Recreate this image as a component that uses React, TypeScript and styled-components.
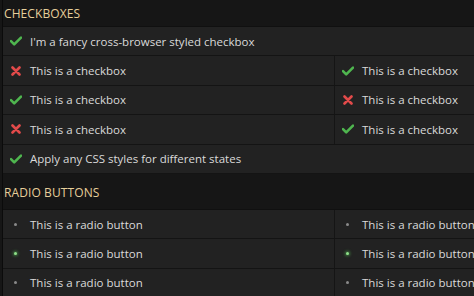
import React from "react";
import styled, { createGlobalStyle } from "styled-components";

const GlobalStyle = createGlobalStyle`
  *, *::before, *::after {
    box-sizing: border-box;
  }
  html, body {
    margin: 0;
    padding: 0;
    background: #161616;
    overflow: hidden;
  }
  body {
    font-family: "Open Sans", "DejaVu Sans", sans-serif;
  }
`;

const Page = styled.div`
  width: 474px;
  height: 296px;
  padding-left: 2px;
  background: #161616;
  display: flex;
  flex-direction: column;
`;

const Frame = styled.div`
  flex: 1;
  border-left: 1px solid #0b0b0b;
  display: flex;
  flex-direction: column;
`;

const Heading = styled.div<{ $gap?: number; $tail?: number }>`
  height: ${(p) => 27 + (p.$tail || 0)}px;
  flex: none;
  margin-top: ${(p) => p.$gap || 0}px;
  padding-bottom: ${(p) => p.$tail || 0}px;
  display: flex;
  align-items: center;
  padding-left: 1px;
  color: #e6cf9a;
  font-size: 12px;
  letter-spacing: 0.1px;
  border-bottom: 1px solid #101010;
`;

const Row = styled.div`
  display: flex;
  height: 29.4px;
  flex: none;
  background: #222222;
  border-bottom: 1px solid #141414;
`;

const Cell = styled.div<{ $w?: number }>`
  display: flex;
  align-items: center;
  flex: ${(p) => (p.$w ? `0 0 ${p.$w}px` : "1 1 auto")};
  min-width: 0;
  overflow: hidden;
  padding-left: 7px;
  gap: 9px;
  color: #dadada;
  font-size: 11.5px;
  white-space: nowrap;
  & + & {
    border-left: 1px solid #151515;
  }
`;

const IconBox = styled.span`
  width: 11px;
  height: 11px;
  display: grid;
  place-items: center;
  flex: none;
`;

const Dot = styled.span<{ $on?: boolean }>`
  width: 3px;
  height: 3px;
  border-radius: 50%;
  background: ${(p) => (p.$on ? "#8fe08a" : "#8a8a8a")};
  box-shadow: ${(p) => (p.$on ? "0 0 3px 1px rgba(90, 200, 90, 0.55)" : "none")};
`;

const Check = () => (
  <svg width="12" height="10" viewBox="0 0 12 10">
    <path
      d="M1 5.2 L4.2 8.4 L11 1.6"
      fill="none"
      stroke="#4fb64f"
      strokeWidth="2.6"
      strokeLinejoin="round"
      strokeLinecap="round"
    />
  </svg>
);

const Cross = () => (
  <svg width="10" height="10" viewBox="0 0 10 10">
    <path
      d="M1.5 1.5 L8.5 8.5 M8.5 1.5 L1.5 8.5"
      fill="none"
      stroke="#e24a4a"
      strokeWidth="2.6"
      strokeLinecap="round"
    />
  </svg>
);

const Box: React.FC<{ on: boolean; label: string; w?: number }> = ({ on, label, w }) => (
  <Cell $w={w}>
    <IconBox>{on ? <Check /> : <Cross />}</IconBox>
    {label}
  </Cell>
);

const Radio: React.FC<{ on?: boolean; w?: number }> = ({ on, w }) => (
  <Cell $w={w}>
    <IconBox>
      <Dot $on={on} />
    </IconBox>
    This is a radio button
  </Cell>
);

const pairs: [boolean, boolean][] = [
  [false, true],
  [true, false],
  [false, true],
];

const App: React.FC = () => {
  return (
    <>
      <GlobalStyle />
      <Page>
        <Frame>
          <Heading>CHECKBOXES</Heading>
          <Row>
            <Box on label="I'm a fancy cross-browser styled checkbox" />
          </Row>
          {pairs.map(([a, b], i) => (
            <Row key={i}>
              <Box on={a} label="This is a checkbox" w={331} />
              <Box on={b} label="This is a checkbox" />
            </Row>
          ))}
          <Row>
            <Box on label="Apply any CSS styles for different states" />
          </Row>
          <Heading $gap={6} $tail={3}>RADIO BUTTONS</Heading>
          <Row>
            <Radio w={331} />
            <Radio />
          </Row>
          <Row>
            <Radio on w={331} />
            <Radio on />
          </Row>
          <Row>
            <Radio w={331} />
            <Radio />
          </Row>
        </Frame>
      </Page>
    </>
  );
};

export default App;
